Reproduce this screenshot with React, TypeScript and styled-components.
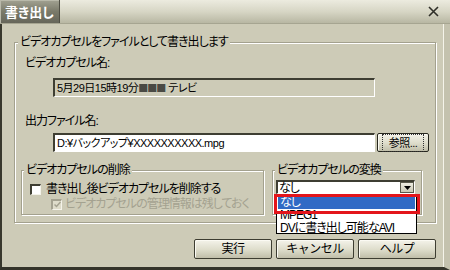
import React from 'react';
import styled, { createGlobalStyle } from 'styled-components';

const FONT = '"Liberation Sans", "Noto Sans CJK JP", sans-serif';
const BG = '#cdcbb7';

const GlobalStyle = createGlobalStyle`
    html, body {
        margin: 0;
        padding: 0;
        background: ${BG};
    }
    body {
        font-family: ${FONT};
        font-size: 12px;
        letter-spacing: -1px;
        color: #000;
        font-feature-settings: "palt";
    }
    * {
        box-sizing: border-box;
    }
`;

const Window = styled.div`
    width: 450px;
    height: 270px;
    display: flex;
    flex-direction: column;
    background: ${BG};
    overflow: hidden;
`;

const TitleBar = styled.div`
    height: 24px;
    flex: none;
    display: flex;
    background: linear-gradient(#ecebdf, #d7d6c5 50%, #b8b7a3);
    border-bottom: 1px solid #a6a591;
`;

const TitleTab = styled.div`
    width: 60px;
    display: flex;
    align-items: center;
    padding-left: 5px;
    color: #fff;
    font-size: 13px;
    font-weight: bold;
    letter-spacing: 0;
    background: linear-gradient(#a2a292, #7a7a6a 50%, #66665a);
    border-right: 1px solid #4f4f44;
    box-shadow: inset 1px 1px 0 #b9b9aa;
`;

const CloseButton = styled.div`
    margin-left: auto;
    margin-right: 5px;
    width: 24px;
    display: flex;
    align-items: center;
    justify-content: center;
`;

const Body = styled.div`
    flex: 1;
    padding: 11px 0 0 12px;
    border-left: 2px solid #38382d;
    border-bottom: 3px solid #34342a;
    border-right: 6px solid #c4c2ae;
    box-shadow: inset -1px 0 0 #f5f4ea;
`;

const Group = styled.fieldset<{ $width: number; $pad: string }>`
    margin: 0;
    width: ${(p) => p.$width}px;
    padding: ${(p) => p.$pad};
    border: 1px solid #a3a18e;
    box-shadow: inset 1px 1px 0 #fff, 1px 1px 0 #fff;
    min-width: 0;
`;

const Legend = styled.legend`
    padding: 0 2px;
    font-size: 12px;
    line-height: 14px;
    background: ${BG};
`;

const Content = styled.div`
    display: flex;
    flex-direction: column;
    padding-left: 7px;
`;

const Label = styled.div<{ $top?: number }>`
    line-height: 14px;
    margin-top: ${(p) => p.$top || 0}px;
`;

const TextField = styled.div<{ $readOnly?: boolean }>`
    width: 322px;
    height: 19px;
    padding-left: 2px;
    font-size: 11px;
    letter-spacing: -0.5px;
    line-height: 16px;
    white-space: nowrap;
    overflow: hidden;
    background: ${(p) => (p.$readOnly ? BG : '#fff')};
    border-top: 2px solid #3e3e32;
    border-left: 2px solid #3e3e32;
    border-right: 1px solid #fff;
    border-bottom: 1px solid #fff;
`;

const Blocks = styled.span`
    font-family: "Noto Sans CJK JP", sans-serif;
    color: #4a4a44;
    font-size: 10px;
    letter-spacing: -1px;
    margin-right: 3px;
`;

const FieldRow = styled.div<{ $top: number }>`
    display: flex;
    gap: 2px;
    margin: ${(p) => p.$top}px 0 0 28px;
`;

const Button = styled.button<{ $w: number; $default?: boolean }>`
    width: ${(p) => p.$w}px;
    height: ${(p) => (p.$default ? 19 : 20)}px;
    padding: 0;
    font-family: ${FONT};
    font-size: 12px;
    letter-spacing: -0.5px;
    line-height: 14px;
    color: #000;
    border: 1px solid ${(p) => (p.$default ? '#26261d' : '#3d3d31')};
    border-radius: 2px;
    background: linear-gradient(#f4f3ea, #dddcca 55%, #c0bea9);
    box-shadow: inset 1px 1px 0 #fbfaf3;
    display: flex;
    align-items: center;
    justify-content: center;
`;

const FocusRing = styled.span`
    padding: 0 5px;
    outline: 1px dotted #333;
    outline-offset: 1px;
    font-size: 11px;
`;

const GroupsRow = styled.div`
    display: flex;
    gap: 8px;
    margin: 11px 0 0 3px;
`;

const CheckRow = styled.div<{ $indent: number; $top: number; $disabled?: boolean }>`
    display: flex;
    align-items: center;
    gap: ${(p) => (p.$disabled ? 3 : 5)}px;
    height: 14px;
    line-height: 14px;
    white-space: nowrap;
    margin: ${(p) => p.$top}px 0 0 ${(p) => p.$indent}px;
    color: ${(p) => (p.$disabled ? '#a4a290' : '#000')};
`;

const Box = styled.span<{ $disabled?: boolean }>`
    width: 11px;
    height: 11px;
    flex: none;
    display: flex;
    align-items: center;
    justify-content: center;
    background: ${(p) => (p.$disabled ? '#dedcca' : '#fff')};
    border-top: 2px solid ${(p) => (p.$disabled ? '#a4a290' : '#3e3e32')};
    border-left: 2px solid ${(p) => (p.$disabled ? '#a4a290' : '#3e3e32')};
    border-right: 1px solid #f4f3ea;
    border-bottom: 1px solid #f4f3ea;
`;

const ComboWrap = styled.div`
    position: relative;
    width: 139px;
    margin-left: 1px;
`;

const Combo = styled.div`
    height: 14px;
    display: flex;
    align-items: center;
    background: #fff;
    border-top: 2px solid #3e3e32;
    border-left: 2px solid #3e3e32;
    border-right: 1px solid #fff;
    border-bottom: 1px solid #fff;
    line-height: 12px;
    padding-left: 1px;
`;

const ComboArrow = styled.span`
    margin-left: auto;
    width: 14px;
    height: 11px;
    display: flex;
    align-items: center;
    justify-content: center;
    background: linear-gradient(#eeede2, #cac8b4);
    border: 1px solid #5a5a4c;
`;

const DropList = styled.div`
    position: absolute;
    top: 14px;
    left: 0;
    width: 141px;
    height: 40px;
    padding: 1px;
    background: #fff;
    border: 1px solid #000;
    z-index: 2;
`;

const Option = styled.div<{ $selected?: boolean }>`
    height: 13px;
    line-height: 13px;
    padding-left: 2px;
    white-space: nowrap;
    background: ${(p) => (p.$selected ? '#316ac5' : 'transparent')};
    color: ${(p) => (p.$selected ? '#fff' : '#000')};
`;

const Highlight = styled.div`
    position: absolute;
    top: -1px;
    left: -3px;
    width: 146px;
    height: 20px;
    border: 3px solid #e3151b;
    z-index: 3;
`;

const ButtonRow = styled.div`
    width: 422px;
    display: flex;
    justify-content: flex-end;
    gap: 4px;
    margin-top: 16px;
`;

const Check = ({ checked, disabled }: { checked?: boolean; disabled?: boolean }) => (
    <Box $disabled={disabled}>
        {checked && (
            <svg width="7" height="7" viewBox="0 0 7 7">
                <path d="M0.5 3.5 L2.5 5.5 L6.5 1" fill="none" stroke={disabled ? '#a4a290' : '#000'} strokeWidth="1.5" />
            </svg>
        )}
    </Box>
);

const App = () => {
    return (
        <Window>
            <GlobalStyle />
            <TitleBar>
                <TitleTab>書き出し</TitleTab>
                <CloseButton>
                    <svg width="11" height="11" viewBox="0 0 11 11">
                        <path d="M1 1 L10 10 M10 1 L1 10" stroke="#2f2f28" strokeWidth="1.6" />
                    </svg>
                </CloseButton>
            </TitleBar>
            <Body>
                <Group $width={422} $pad="7px 6px 7px 3px">
                    <Legend>ビデオカプセルをファイルとして書き出します</Legend>
                    <Content>
                        <Label>ビデオカプセル名:</Label>
                        <FieldRow $top={8}>
                            <TextField $readOnly>
                                5月29日15時19分<Blocks>■■■</Blocks>テレビ
                            </TextField>
                        </FieldRow>
                        <Label $top={17}>出力ファイル名:</Label>
                        <FieldRow $top={5}>
                            <TextField>D:¥バックアップ¥XXXXXXXXXX.mpg</TextField>
                            <Button $w={52} $default>
                                <FocusRing>参照...</FocusRing>
                            </Button>
                        </FieldRow>
                    </Content>
                    <GroupsRow>
                        <Group $width={243} $pad="5px 2px 3px 2px">
                            <Legend>ビデオカプセルの削除</Legend>
                            <CheckRow $indent={6} $top={0}>
                                <Check />
                                書き出し後ビデオカプセルを削除する
                            </CheckRow>
                            <CheckRow $indent={27} $top={1} $disabled>
                                <Check checked disabled />
                                ビデオカプセルの管理情報は残しておく
                            </CheckRow>
                        </Group>
                        <Group $width={150} $pad="3px 2px 3px 2px">
                            <Legend>ビデオカプセルの変換</Legend>
                            <ComboWrap>
                                <Combo>
                                    なし
                                    <ComboArrow>
                                        <svg width="7" height="4" viewBox="0 0 7 4">
                                            <path d="M0 0 H7 L3.5 4 Z" fill="#000" />
                                        </svg>
                                    </ComboArrow>
                                </Combo>
                                <DropList>
                                    <Option $selected>なし</Option>
                                    <Option>MPEG1</Option>
                                    <Option>DVに書き出し可能なAVI</Option>
                                    <Highlight />
                                </DropList>
                            </ComboWrap>
                        </Group>
                    </GroupsRow>
                </Group>
                <ButtonRow>
                    <Button $w={78}>実行</Button>
                    <Button $w={78}>キャンセル</Button>
                    <Button $w={78}>ヘルプ</Button>
                </ButtonRow>
            </Body>
        </Window>
    );
};

export default App;
